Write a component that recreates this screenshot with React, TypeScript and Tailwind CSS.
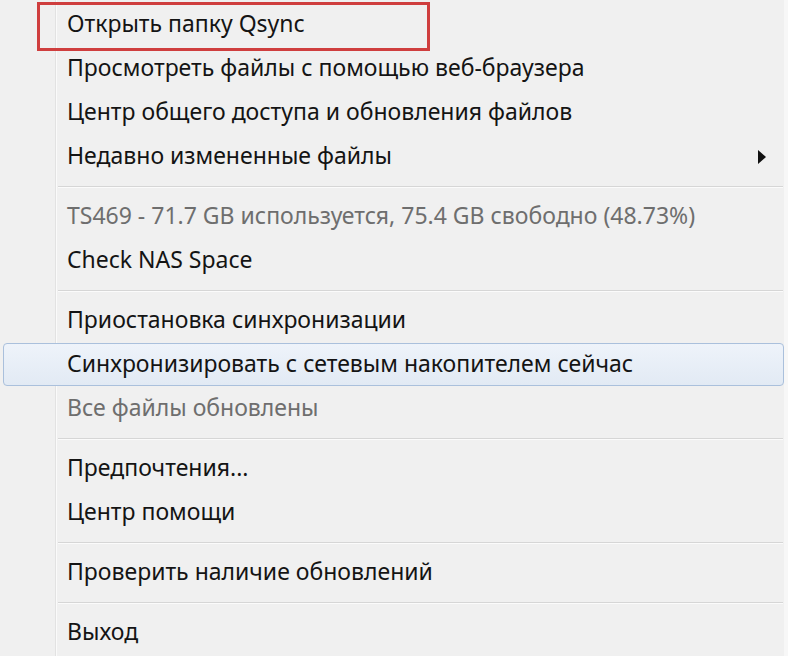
import React from 'react'

type Item =
  | { kind: 'item'; label: string; muted?: boolean; hot?: boolean; boxed?: boolean; submenu?: boolean }
  | { kind: 'sep' }

const items: Item[] = [
  { kind: 'item', label: 'Открыть папку Qsync', boxed: true },
  { kind: 'item', label: 'Просмотреть файлы с помощью веб-браузера' },
  { kind: 'item', label: 'Центр общего доступа и обновления файлов' },
  { kind: 'item', label: 'Недавно измененные файлы', submenu: true },
  { kind: 'sep' },
  { kind: 'item', label: 'TS469 - 71.7 GB используется, 75.4 GB свободно (48.73%)', muted: true },
  { kind: 'item', label: 'Check NAS Space' },
  { kind: 'sep' },
  { kind: 'item', label: 'Приостановка синхронизации' },
  { kind: 'item', label: 'Синхронизировать с сетевым накопителем сейчас', hot: true },
  { kind: 'item', label: 'Все файлы обновлены', muted: true },
  { kind: 'sep' },
  { kind: 'item', label: 'Предпочтения...' },
  { kind: 'item', label: 'Центр помощи' },
  { kind: 'sep' },
  { kind: 'item', label: 'Проверить наличие обновлений' },
  { kind: 'sep' },
  { kind: 'item', label: 'Выход' },
]

function MenuRow({ item }: { item: Extract<Item, { kind: 'item' }> }) {
  return (
    <div className="relative h-[44px] flex items-center">
      {item.hot && (
        <div className="absolute left-[3px] right-[4px] top-0 bottom-px rounded-[4px] border border-[#aac0dc] bg-gradient-to-b from-[#eef3fa] to-[#e2eaf4]" />
      )}
      <span
        className={`relative pl-[67px] pb-[4px] flex-1 text-[23px] leading-none ${
          item.muted ? 'text-[#6e6e6e]' : 'text-[#141414]'
        }`}
      >
        {item.label}
      </span>
      {item.submenu && (
        <svg className="relative mr-[22px]" width="8" height="14" viewBox="0 0 8 14">
          <path d="M0 0 L8 7 L0 14 Z" fill="#111" />
        </svg>
      )}
      {item.boxed && (
        <div className="absolute left-[37px] top-[-1px] w-[393px] h-[49px] border-[3px] border-[#cf3e3e]" />
      )}
    </div>
  )
}

export default function App() {
  return (
    <div
      className="relative w-[788px] h-[656px] overflow-hidden bg-[#f0f0f0] pt-[3px]"
      style={{ fontFamily: '"Noto Sans", "Open Sans", sans-serif' }}
    >
      <div className="absolute left-[55px] top-0 bottom-0 w-[3px] flex">
        <div className="w-px bg-[#e2e2e2]" />
        <div className="w-px bg-[#fafafa]" />
      </div>
      <div className="absolute right-0 top-0 bottom-0 w-[4px] bg-[#f7f7f7]" />
      {items.map((it, i) =>
        it.kind === 'sep' ? (
          <div key={i} className="h-[16px] flex flex-col justify-center pl-[58px] pr-[5px]">
            <div className="h-px bg-[#d6d6d6]" />
            <div className="h-px bg-[#fbfbfb]" />
          </div>
        ) : (
          <MenuRow key={i} item={it} />
        )
      )}
    </div>
  )
}
